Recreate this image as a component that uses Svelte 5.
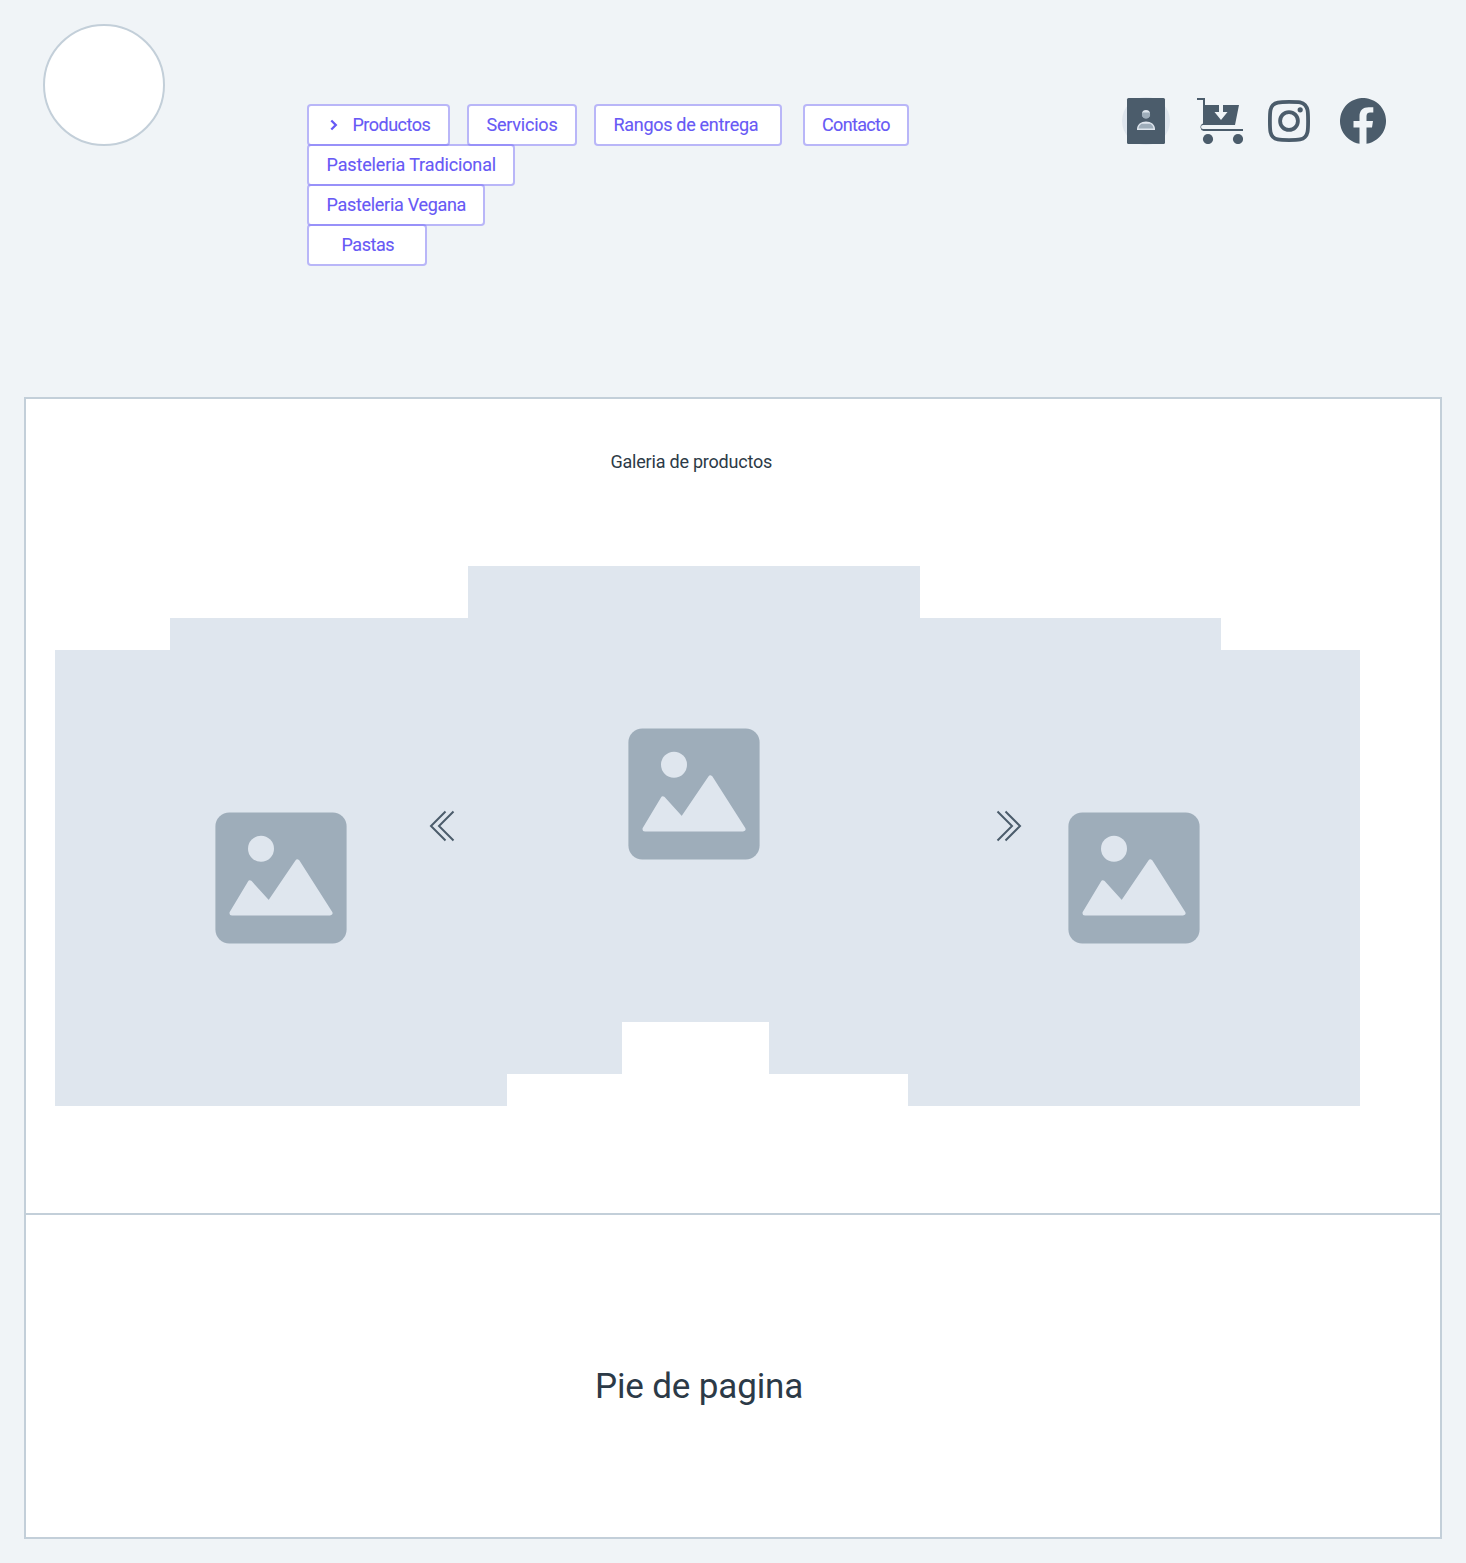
<script>
  const menu = [
    { label: 'Productos', width: 143, pad: 43.5, gap: 17, spacing: -0.5, chevron: true },
    { label: 'Servicios', width: 110, pad: 17.5, gap: 17, spacing: -0.22 },
    { label: 'Rangos de entrega', width: 188, pad: 17.5, gap: 21, spacing: -0.3 },
    { label: 'Contacto', width: 106, pad: 17, gap: 0, spacing: -0.65 }
  ];
  const submenu = [
    { label: 'Pasteleria Tradicional', width: 208, pad: 17.5, spacing: -0.13 },
    { label: 'Pasteleria Vegana', width: 178, pad: 17.5, spacing: -0.3 },
    { label: 'Pastas', width: 120, pad: 32.5, spacing: -0.45 }
  ];
  const tiles = [
    { name: 'left', icon: false },
    { name: 'right', icon: false },
    { name: 'far-left', icon: true },
    { name: 'far-right', icon: true },
    { name: 'center', icon: true }
  ];
</script>

{#snippet item(entry)}
  <button
    class="item"
    style:width="{entry.width}px"
    style:padding-left="{entry.pad}px"
    style:margin-right="{entry.gap ?? 0}px"
    style:letter-spacing="{entry.spacing}px"
  >
    {#if entry.chevron}
      <svg class="caret" viewBox="0 0 10 12" aria-hidden="true"><path d="M2.300 1.500 6.800 6 2.300 10.500" /></svg>
    {/if}
    {entry.label}
  </button>
{/snippet}

<div class="page">
  <header>
    <div class="logo"></div>
    <nav>
      <div class="menu">
        {#each menu as entry}{@render item(entry)}{/each}
      </div>
      <div class="submenu">
        {#each submenu as entry}{@render item(entry)}{/each}
      </div>
    </nav>
    <div class="links">
      <svg class="account" viewBox="0 0 48 48" role="img" aria-label="Cuenta">
        <circle cx="24" cy="24" r="24" fill="#dfe6ee" />
        <rect x="5" y="1" width="38" height="46" rx="1.5" />
        <circle cx="24" cy="17" r="4" fill="#dfe6ee" />
        <path d="M20.6 15.5h6.8a4 4 0 1 1-6.8 0z" fill="#9eadba" />
        <path d="M15 33v-1c0-4.500 4-7.500 9-7.500s9 3 9 7.500v1z" fill="#dfe6ee" />
        <path d="M16.500 31.500c.2-2 1.200-3.700 3-4.800h9c1.800 1.100 2.800 2.800 3 4.800z" fill="#9eadba" />
      </svg>
      <svg class="cart" viewBox="0 0 46 46" role="img" aria-label="Carrito">
        <path d="M0 0h8v7h14v7h-4.500l6.500 8 6.500-8h-4.500V7h16l-4 20H6a2 2 0 0 0 0 4h40v2H6.500a4 4 0 0 1-.5-7.600V2H0z" />
        <circle cx="11" cy="41" r="5.100" />
        <circle cx="41" cy="41" r="5.100" />
      </svg>
      <svg class="instagram" viewBox="0 0 42 42" role="img" aria-label="Instagram">
        <path class="line" d="M21 1.900C32 1.900 34.500 2.100 37 5s3.100 5 3.100 16-.6 13.500-3.100 16-5 3.100-16 3.100S7.500 39.500 5 37s-3.100-5-3.100-16S2.500 7.500 5 5s5-3.100 16-3.100z" />
        <circle class="line" cx="21" cy="21" r="8.900" />
        <circle cx="32.200" cy="9.800" r="2.600" />
      </svg>
      <svg class="facebook" viewBox="0 0 46 46" role="img" aria-label="Facebook">
        <path d="M19.500 45.700A23 23 0 1 1 26.500 45.700V29.500h5.500l1-6.500h-6.500v-5c0-2.300 1.500-3.400 3.500-3.400h3.300V9.200h-4.600c-5.600 0-9.200 3.200-9.200 9V23h-6v6.500h6z" />
      </svg>
    </div>
  </header>

  <main>
    <section class="gallery">
      <h1>Galeria de productos</h1>
      <div class="carousel">
        {#each tiles as tile}
          <div class="tile {tile.name}">
            {#if tile.icon}
              <svg class="picture" viewBox="0 0 132 132" aria-hidden="true">
                <rect x=".4" y=".4" width="131.200" height="131.200" rx="14" fill="#9eadba" />
                <circle cx="46" cy="36.700" r="13" fill="#dfe6ee" />
                <path d="M17 101 35 71l19 21 28.500-42L115 101z" fill="#dfe6ee" stroke="#dfe6ee" stroke-width="5" stroke-linejoin="round" />
              </svg>
            {/if}
          </div>
        {/each}
        <svg class="arrow previous" viewBox="0 0 26 32" role="img" aria-label="Anterior">
          <path d="M16.500 1.500 2 16l14.500 14.500M24.500 1.500 10 16l14.500 14.500" />
        </svg>
        <svg class="arrow next" viewBox="0 0 26 32" role="img" aria-label="Siguiente">
          <path d="M1.500 1.500 16 16 1.500 30.500M9.500 1.500 24 16 9.500 30.500" />
        </svg>
      </div>
    </section>
    <footer>Pie de pagina</footer>
  </main>
</div>

<style>
  :global(body) {
    background: #f0f4f7;
  }

  .page {
    box-sizing: border-box;
    width: 1466px;
    height: 1563px;
    padding: 24px;
    font-family: Roboto, 'Liberation Sans', sans-serif;
    color: #2c3a47;
  }

  header {
    display: flex;
    height: 373px;
    padding-left: 19px;
  }

  .logo {
    box-sizing: border-box;
    width: 122px;
    height: 122px;
    border: 2px solid #c3cfd9;
    border-radius: 50%;
    background: #fff;
  }

  nav {
    width: 602px;
    margin: 80px 0 0 142px;
  }

  .menu {
    display: flex;
  }

  .submenu {
    display: flex;
    flex-direction: column;
  }

  .item {
    box-sizing: border-box;
    display: flex;
    flex: none;
    align-items: center;
    position: relative;
    height: 42px;
    padding: 0;
    border: 2px solid rgba(103, 91, 250, 0.4);
    border-radius: 4px;
    background: #fff;
    background-clip: padding-box;
    font: 400 18px/38px Roboto, 'Liberation Sans', sans-serif;
    color: #6759f5;
    -webkit-text-stroke: 0.12px #6759f5;
    white-space: nowrap;
  }

  .submenu .item {
    margin-top: -2px;
  }

  .caret {
    position: absolute;
    left: 20px;
    top: 13px;
    width: 10px;
    height: 12px;
    fill: none;
    stroke: #6759f5;
    stroke-width: 2.3;
  }

  .links {
    display: flex;
    margin: 73px 0 0 213px;
    fill: #4b5c6b;
  }

  .account {
    width: 48px;
    height: 48px;
  }

  .cart {
    width: 46px;
    height: 46px;
    margin: 1px 0 0 27px;
  }

  .instagram {
    width: 42px;
    height: 42px;
    margin: 3px 0 0 25px;
  }

  .line {
    fill: none;
    stroke: #4b5c6b;
    stroke-width: 3.8;
  }

  .facebook {
    width: 46px;
    height: 46px;
    margin: 1px 0 0 30px;
  }

  main {
    box-sizing: border-box;
    width: 1418px;
    height: 1142px;
    border: 2px solid #c3cfd9;
    background: #fff;
  }

  .gallery {
    box-sizing: border-box;
    height: 816px;
    padding-top: 51px;
    border-bottom: 2px solid #c3cfd9;
  }

  h1 {
    margin: 0 0 92px 584.5px;
    font-size: 18px;
    font-weight: 400;
    line-height: 24px;
    letter-spacing: -0.22px;
  }

  .carousel {
    display: grid;
    position: relative;
    width: 1305px;
    margin-left: 29px;
    grid-template-columns: 115px 298px 39px 115px 147px 139px 12px 301px 139px;
    grid-template-rows: 52px 32px 372px 52px 32px;
  }

  .tile {
    display: grid;
    place-items: center;
    background: #dfe6ee;
  }

  .far-left {
    grid-area: 3 / 1 / 6 / 4;
  }

  .left {
    grid-area: 2 / 2 / 5 / 5;
  }

  .center {
    grid-area: 1 / 3 / 4 / 8;
  }

  .right {
    grid-area: 2 / 6 / 5 / 9;
  }

  .far-right {
    grid-area: 3 / 7 / 6 / 10;
  }

  .picture {
    width: 132px;
    height: 132px;
  }

  .arrow {
    position: absolute;
    top: 244px;
    width: 26px;
    height: 32px;
    fill: none;
    stroke: #4b5c6b;
    stroke-width: 2;
  }

  .previous {
    left: 374px;
  }

  .next {
    left: 941px;
  }

  footer {
    padding: 151px 0 0 569px;
    font-size: 35px;
    line-height: 42px;
    letter-spacing: -0.15px;
  }
</style>
